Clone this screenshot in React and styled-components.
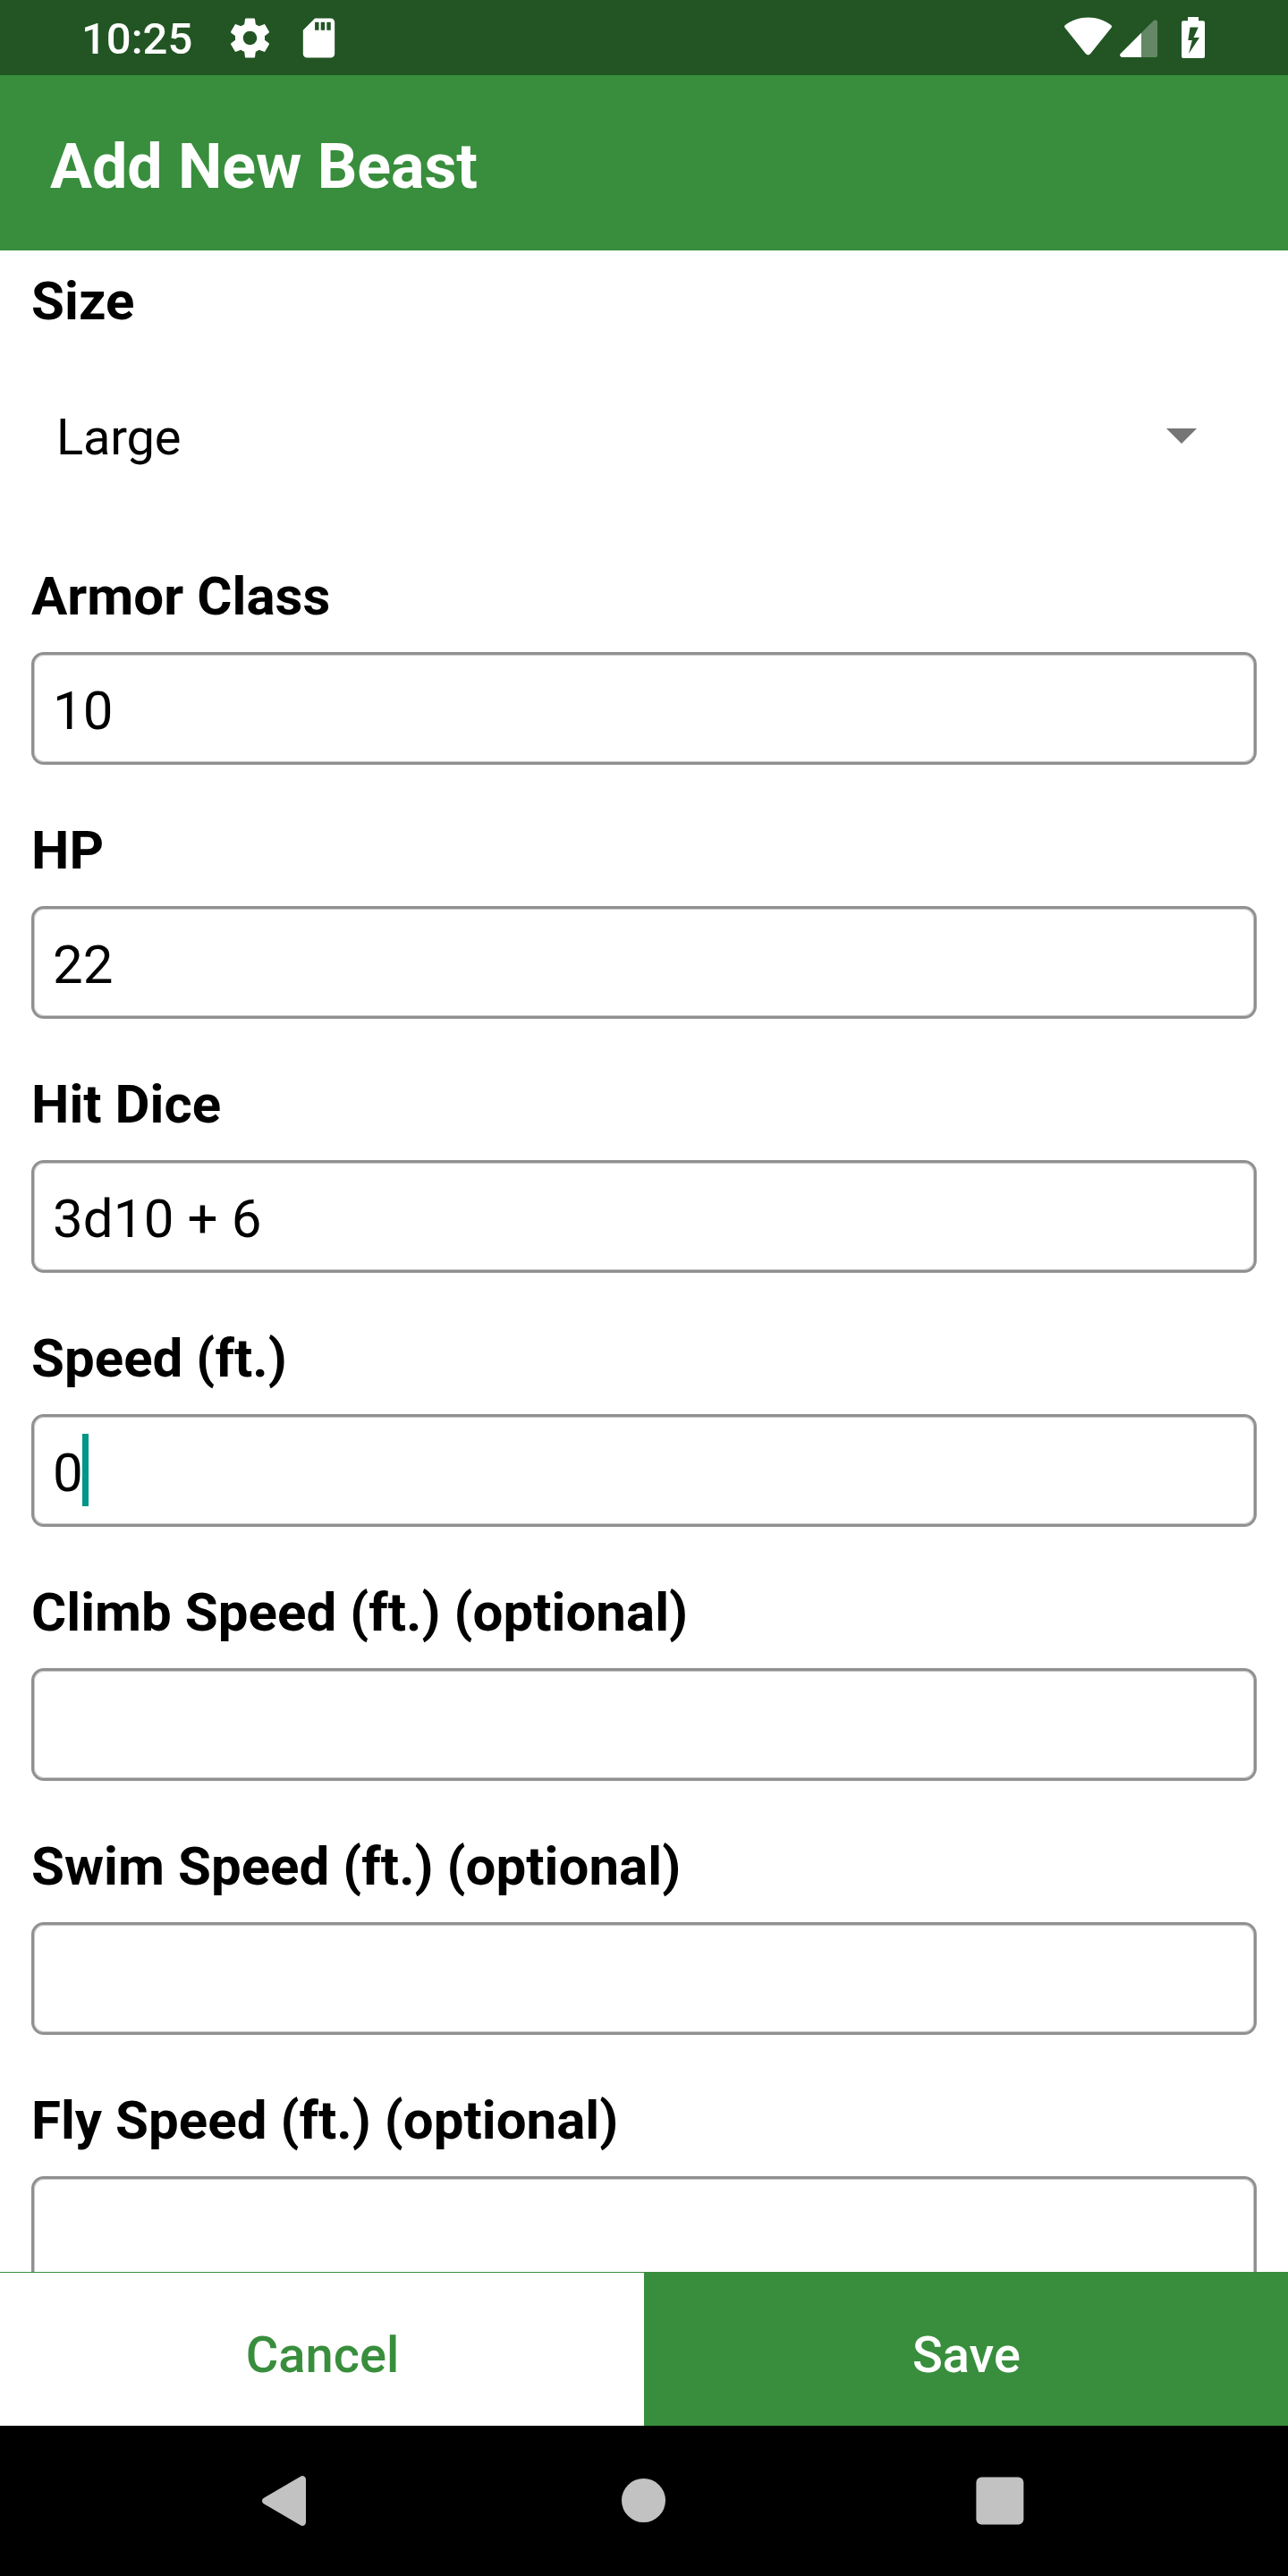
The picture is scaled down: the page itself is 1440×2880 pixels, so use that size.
import React from "react";
import styled, { createGlobalStyle } from "styled-components";

const GREEN = "#388e3c";

const GlobalStyle = createGlobalStyle`
  * { box-sizing: border-box; }
  body { margin: 0; background: #fff; }
`;

const Screen = styled.div`
  display: flex;
  flex-direction: column;
  width: 1440px;
  height: 2880px;
  overflow: hidden;
  background: #fff;
  color: #000;
  font-family: Roboto, "Liberation Sans", sans-serif;
`;

const StatusBar = styled.div`
  flex: none;
  display: flex;
  justify-content: space-between;
  height: 84px;
  padding: 0 93px 0 91px;
  background: #225523;
  color: #fff;
`;

const StatusGroup = styled.div`
  display: flex;
  align-items: flex-start;
`;

const Clock = styled.span`
  width: 162px;
  padding-top: 15px;
  font-size: 49px;
  font-weight: 500;
  line-height: 58px;
`;

const StatusIcon = styled.svg`
  display: block;
  flex: none;
  fill: currentColor;
  margin-left: ${(p) => p.$left || 0}px;
  margin-top: ${(p) => p.$top || 0}px;
`;

const Header = styled.header`
  flex: none;
  display: flex;
  align-items: center;
  height: 196px;
  padding: 8px 56px 0;
  background: ${GREEN};
`;

const Title = styled.h1`
  margin: 0;
  color: #fff;
  font-size: 70px;
  font-weight: 700;
  line-height: 82px;
  letter-spacing: -0.07px;
`;

const Form = styled.main`
  flex: 1;
  min-height: 0;
  overflow: hidden;
  padding: 22px 35px 0;
`;

const Field = styled.div`
  display: flex;
  flex-direction: column;
  margin-bottom: 60px;
`;

const Label = styled.div`
  font-size: 60px;
  font-weight: 700;
  line-height: 70px;
  letter-spacing: 0.03px;
  white-space: nowrap;
`;

const Select = styled.div`
  display: flex;
  align-items: center;
  justify-content: space-between;
  height: 200px;
  padding: 34px 67px 0 28px;
  font-size: 56px;
  line-height: 66px;
  letter-spacing: -0.2px;
`;

const Arrow = styled.svg`
  display: block;
  margin-bottom: 3px;
  fill: #757575;
`;

const Input = styled.div`
  display: flex;
  align-items: flex-start;
  height: 126px;
  margin-top: 27px;
  margin-bottom: 1px;
  padding: 19px 21px 0;
  border: 3px solid #909090;
  border-radius: 14px;
  box-shadow: inset 0 0 0 1px #c8c8c8;
`;

const Value = styled.span`
  padding-top: 9px;
  font-size: 60px;
  line-height: 70px;
  letter-spacing: 0.12px;
`;

const Caret = styled.span`
  width: 7px;
  height: 81px;
  margin-left: -1px;
  background: #009688;
`;

const Actions = styled.div`
  flex: none;
  display: flex;
  height: 172px;
`;

const Action = styled.button`
  flex: 1;
  padding: 12px 0 0 1px;
  border: 0;
  border-top: 1px solid ${GREEN};
  background: ${(p) => (p.$primary ? GREEN : "#fff")};
  color: ${(p) => (p.$primary ? "#fff" : GREEN)};
  font-family: inherit;
  font-size: 56px;
  font-weight: 500;
  line-height: 66px;
`;

const NavBar = styled.nav`
  flex: none;
  display: flex;
  align-items: center;
  height: 168px;
  padding-left: 293px;
  background: #000;
`;

const NavIcon = styled.svg`
  display: block;
  flex: none;
  fill: #c2c2c2;
  margin-right: ${(p) => p.$gap || 0}px;
`;

const fields = [
  { label: "Armor Class", value: "10" },
  { label: "HP", value: "22" },
  { label: "Hit Dice", value: "3d10 + 6" },
  { label: "Speed (ft.)", value: "0", focused: true },
  { label: "Climb Speed (ft.) (optional)" },
  { label: "Swim Speed (ft.) (optional)" },
  { label: "Fly Speed (ft.) (optional)" },
];

export default function App() {
  return (
    <Screen>
      <GlobalStyle />
      <StatusBar>
        <StatusGroup>
          <Clock>10:25</Clock>
          <StatusIcon width="53" height="53" viewBox="0 0 24 24" $top={16}>
            <path d="M19.43 12.98c.04-.32.07-.64.07-.98s-.03-.66-.07-.98l2.11-1.65c.19-.15.24-.42.12-.64l-2-3.46c-.12-.22-.39-.3-.61-.22l-2.49 1c-.52-.4-1.08-.73-1.69-.98l-.38-2.65C14.46 2.18 14.25 2 14 2h-4c-.25 0-.46.18-.49.42l-.38 2.65c-.61.25-1.17.59-1.69.98l-2.49-1c-.23-.09-.49 0-.61.22l-2 3.46c-.13.22-.07.49.12.64l2.11 1.65c-.04.32-.07.65-.07.98s.03.66.07.98l-2.11 1.65c-.19.15-.24.42-.12.64l2 3.46c.12.22.39.3.61.22l2.49-1c.52.4 1.08.73 1.69.98l.38 2.65c.03.24.24.42.49.42h4c.25 0 .46-.18.49-.42l.38-2.65c.61-.25 1.17-.59 1.69-.98l2.49 1c.23.09.49 0 .61-.22l2-3.46c.12-.22.07-.49-.12-.64l-2.11-1.65zM12 15.5c-1.93 0-3.5-1.57-3.5-3.5s1.57-3.5 3.5-3.5 3.5 1.57 3.5 3.5-1.57 3.5-3.5 3.5z" />
          </StatusIcon>
          <StatusIcon width="53" height="53" viewBox="0 0 24 24" $top={16} $left={24}>
            <path d="M18 2h-8L4 8v12c0 1.1.9 2 2 2h12c1.1 0 2-.9 2-2V4c0-1.1-.9-2-2-2zm-6 6h-2V4h2v4zm3 0h-2V4h2v4zm3 0h-2V4h2v4z" />
          </StatusIcon>
        </StatusGroup>
        <StatusGroup>
          <StatusIcon width="53" height="43" viewBox="0 0 53 43" $top={19}>
            <path d="M.6 9.2C8 3.8 17 .6 26.5 .6S45 3.8 52.4 9.2q1 1.200 .2 2.500L29 41.300q-2.500 2.300-5 0L.4 11.700Q-.4 10.400 .6 9.200z" />
          </StatusIcon>
          <StatusIcon width="42" height="42" viewBox="0 0 42 42" $top={22} $left={9}>
            <path d="M24 14.800V42H2Q-.8 41 .5 38.300z" />
            <path opacity="0.3" d="M24 14.800 38.300 .6Q41-.6 42 2V40Q42 42 40 42H24z" />
          </StatusIcon>
          <StatusIcon width="26" height="46" viewBox="0 0 26 46" $top={19} $left={27}>
            <path fillRule="evenodd" d="M7 0h12v4.300h5q2 0 2 2V44q0 2-2 2H2q-2 0-2-2V6.300q0-2 2-2h5zM9.500 11.500 7.300 26h4.500L8 41 20 23h-6.500L18.700 11.500z" />
          </StatusIcon>
        </StatusGroup>
      </StatusBar>
      <Header>
        <Title>Add New Beast</Title>
      </Header>
      <Form>
        <Field>
          <Label>Size</Label>
          <Select>
            Large
            <Arrow width="34" height="17" viewBox="0 0 34 17">
              <path d="M0 0h34L17 17z" />
            </Arrow>
          </Select>
        </Field>
        {fields.map((f) => (
          <Field key={f.label}>
            <Label>{f.label}</Label>
            <Input>
              {f.value && <Value>{f.value}</Value>}
              {f.focused && <Caret />}
            </Input>
          </Field>
        ))}
      </Form>
      <Actions>
        <Action>Cancel</Action>
        <Action $primary>Save</Action>
      </Actions>
      <NavBar>
        <NavIcon width="49" height="56" viewBox="0 0 49 56" $gap={353}>
          <path d="M43 .7Q45 -.4 47 .6 49 1.700 49 4V52q0 2.300-2 3.400-2 1-4-.100L1.500 31Q0 30 0 28t1.500-3z" />
        </NavIcon>
        <NavIcon width="49" height="50" viewBox="0 0 49 50" $gap={347}>
          <circle cx="24.5" cy="24.5" r="24.5" />
        </NavIcon>
        <NavIcon width="54" height="54" viewBox="0 0 54 54">
          <rect x=".4" y=".4" width="53" height="53" rx="6" />
        </NavIcon>
      </NavBar>
    </Screen>
  );
}
